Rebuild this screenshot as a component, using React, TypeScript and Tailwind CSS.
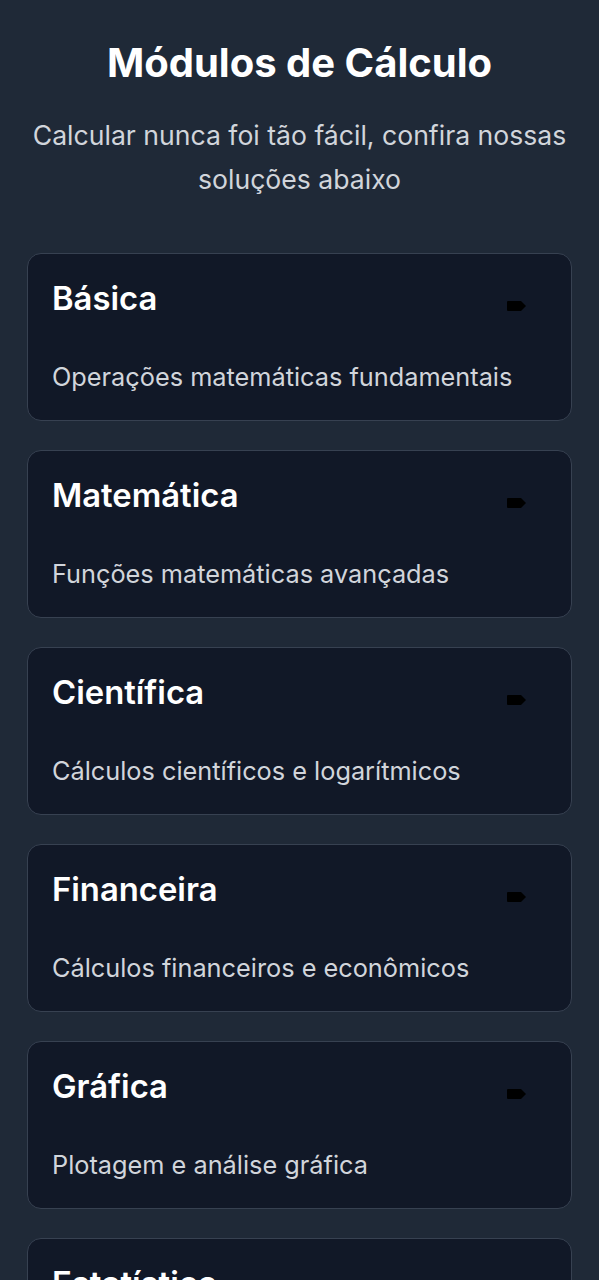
import React from "react";

const modules = [
  { title: "Básica", description: "Operações matemáticas fundamentais" },
  { title: "Matemática", description: "Funções matemáticas avançadas" },
  { title: "Científica", description: "Cálculos científicos e logarítmicos" },
  { title: "Financeira", description: "Cálculos financeiros e econômicos" },
  { title: "Gráfica", description: "Plotagem e análise gráfica" },
  { title: "Estatística", description: "Análise estatística e probabilidades" },
];

function TagIcon() {
  return (
    <svg width="21" height="12" viewBox="0 0 21 12" className="shrink-0">
      <path d="M2 1 H15 L20 6 L15 11 H2 Q1 11 1 10 V2 Q1 1 2 1 Z" fill="#000" />
    </svg>
  );
}

function ModuleCard({ title, description }: { title: string; description: string }) {
  return (
    <div className="rounded-[14px] border border-[#374151] bg-[#111827] px-6 pt-6 pb-[27px]">
      <div className="flex items-center justify-between">
        <h3 className="text-[32.8px] leading-[40px] font-semibold text-white">{title}</h3>
        <div className="mr-5 mt-4">
          <TagIcon />
        </div>
      </div>
      <p className="mt-[43px] text-[25.3px] leading-[32px] text-[#d1d5db]">{description}</p>
    </div>
  );
}

export default function App() {
  return (
    <div
      className="min-h-screen bg-[#1f2937] px-[27px] pt-[39px] pb-10"
      style={{ fontFamily: "Inter, 'Noto Sans', sans-serif" }}
    >
      <header className="text-center">
        <h1 className="text-[40px] leading-[48px] font-bold text-white">Módulos de Cálculo</h1>
        <p className="mt-[26px] text-[26.6px] leading-[44px] text-[#d1d5db]">
          Calcular nunca foi tão fácil, confira nossas soluções abaixo
        </p>
      </header>
      <div className="mt-[52px] flex flex-col gap-[29px]">
        {modules.map((m) => (
          <ModuleCard key={m.title} title={m.title} description={m.description} />
        ))}
      </div>
    </div>
  );
}
